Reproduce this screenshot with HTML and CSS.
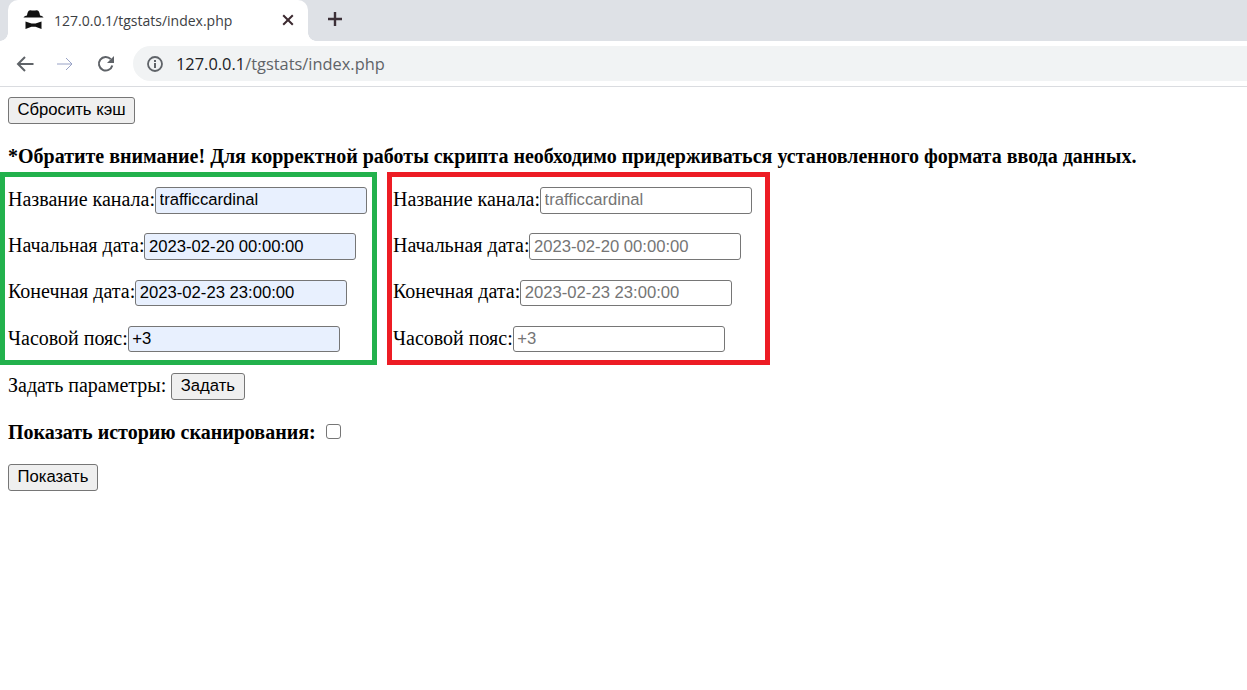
FILE: index.html
```html
<!DOCTYPE html>
<html lang="ru">
<head>
<meta charset="utf-8">
<title>tgstats</title>
<link rel="stylesheet" href="styles.css">
</head>
<body>
<header class="browser">
  <div class="tabstrip">
    <div class="tab">
      <svg class="spy" width="22" height="20" viewBox="0 0 22 20"><path fill="#111" d="M5.500 1C6.500-.2 8.800.6 10.500.6S14.500-.2 15.500 1c.8 1 1.300 3 1.500 4.600 1.600.3 3 .8 3.500 1.900H.5C1 6.400 2.400 5.900 4 5.600 4.200 4 4.700 2 5.500 1z"/><path fill="#111" d="M2.500 11.500l6 2h4l6-2V19l-6-2.300h-4L2.500 19z"/></svg>
      <span class="tab-title">127.0.0.1/tgstats/index.php</span>
      <svg class="close" width="12" height="12" viewBox="0 0 12 12"><path d="M1.200 1.200l9.600 9.600M10.800 1.200l-9.600 9.600" stroke="#3c2a30" stroke-width="2"/></svg>
    </div>
    <svg class="plus" width="16" height="16" viewBox="0 0 16 16"><path d="M8 1v14M1 8h14" stroke="#3c3038" stroke-width="2.400"/></svg>
  </div>
  <div class="toolbar">
    <svg class="nav" width="18" height="16" viewBox="0 0 18 16"><path d="M17.500 8H2M9 1L2 8l7 7" fill="none" stroke="#5f6368" stroke-width="2"/></svg>
    <svg class="nav" width="18" height="16" viewBox="0 0 18 16"><path d="M1 8h15M10 2l6 6-6 6" fill="none" stroke="#98a2c6" stroke-width="1"/></svg>
    <svg class="nav reload" width="18" height="18" viewBox="0 0 18 18"><path d="M15.300 10.500A6.800 6.800 0 1 1 13.800 4.200" fill="none" stroke="#5f6368" stroke-width="2"/><path fill="#5f6368" d="M17 1v7h-7z"/></svg>
    <div class="omnibox">
      <svg class="info" width="16" height="16" viewBox="0 0 16 16"><circle cx="8" cy="8" r="7" fill="none" stroke="#5f6368" stroke-width="1.800"/><path d="M7 7h2v5H7zM7 4h2v2H7z" fill="#5f6368"/></svg>
      <span class="url"><span class="host">127.0.0.1</span>/tgstats/index.php</span>
    </div>
  </div>
</header>
<main class="page">
  <button class="btn btn-block" type="button">Сбросить кэш</button>
  <p class="notice"><b>*Обратите внимание! Для корректной работы скрипта необходимо придерживаться установленного формата ввода данных.</b></p>
  <div class="boxes">
    <form class="box box-green">
      <p class="row"><label>Название канала:</label><input class="field filled" value="trafficcardinal"></p>
      <p class="row"><label>Начальная дата:</label><input class="field filled" value="2023-02-20 00:00:00"></p>
      <p class="row"><label>Конечная дата:</label><input class="field filled" value="2023-02-23 23:00:00"></p>
      <p class="row"><label>Часовой пояс:</label><input class="field filled" value="+3"></p>
    </form>
    <form class="box box-red">
      <p class="row"><label>Название канала:</label><input class="field" placeholder="trafficcardinal"></p>
      <p class="row"><label>Начальная дата:</label><input class="field" placeholder="2023-02-20 00:00:00"></p>
      <p class="row"><label>Конечная дата:</label><input class="field" placeholder="2023-02-23 23:00:00"></p>
      <p class="row"><label>Часовой пояс:</label><input class="field" placeholder="+3"></p>
    </form>
  </div>
  <p class="set"><span class="set-label">Задать параметры:</span> <button class="btn" type="button">Задать</button></p>
  <p class="history"><b>Показать историю сканирования:</b> <input class="check" type="checkbox"></p>
  <button class="btn btn-block" type="button">Показать</button>
</main>
</body>
</html>
```
FILE: styles.css
```css
* { box-sizing: border-box; }
html, body { margin: 0; padding: 0; background: #fff; overflow: hidden; }
body { height: 690px; font-family: "Liberation Serif", serif; font-size: 20px; color: #000; }

.browser { height: 87px; border-bottom: 1px solid #dadce0; display: flex; flex-direction: column; }
.tabstrip { height: 41px; background: #dee1e6; display: flex; align-items: center; padding-left: 8px; }
.tab { position: relative; width: 300px; height: 41px; background: #fff; border-radius: 10px 10px 0 0; display: flex; align-items: center; padding-left: 15px; }
.tab::before, .tab::after { content: ""; position: absolute; bottom: 0; width: 8px; height: 8px; }
.tab::before { left: -8px; background: radial-gradient(circle at 0 0, #dee1e6 7.500px, #fff 8px); }
.tab::after { right: -8px; background: radial-gradient(circle at 100% 0, #dee1e6 7.500px, #fff 8px); }
.spy { flex: none; margin-top: -2px; }
.tab-title { margin-left: 9px; font: 14px "Open Sans", sans-serif; color: #3c4043; white-space: nowrap; width: 198px; }
.close { margin-left: 30px; flex: none; margin-top: -2px; }
.plus { margin-left: 19px; margin-top: -3px; }

.toolbar { height: 45px; background: #fff; display: flex; align-items: center; padding-left: 16px; }
.nav { flex: none; margin-right: 22px; }
.reload { margin-left: 1px; }
.omnibox { flex: 1; height: 35px; margin-left: -4px; background: #f1f3f4; border-radius: 18px 0 0 18px; display: flex; align-items: center; padding-left: 14px; }
.info { flex: none; }
.url { margin-left: 13px; font: 16.400px "Open Sans", sans-serif; color: #5f6368; white-space: nowrap; }
.host { color: #202124; }

.page { padding: 10px 8px 0; }
.btn { height: 27px; padding: 0 8.500px 2px; font: 16.670px "Liberation Sans", sans-serif; color: #000; background: #efefef; border: 1px solid #767676; border-radius: 3px; }
.btn-block { display: block; }
.notice { margin: 21px 0 5px; line-height: 22px; }

.boxes { display: flex; gap: 10px; margin-left: -8px; }
.box { border: 5px solid; height: 193px; padding: 10px 0 0 3px; }
.box-green { width: 377px; border-color: #22b14c; }
.box-red { width: 383px; border-color: #ed1c24; padding-left: 1px; }
.row { margin: 0 0 19.800px; height: 26.500px; display: flex; align-items: center; }
.row label { white-space: nowrap; padding-bottom: 2px; }
.field { width: 212px; height: 26.500px; padding: 0 3.500px; font: 16.670px "Liberation Sans", sans-serif; color: #000; background: #fff; border: 1px solid #767676; border-radius: 3px; outline: 0; }
.field.filled { background: #e8f0fe; }
.field::placeholder { color: #757575; opacity: 1; }

.set { margin: 8px 0 0; height: 27px; display: flex; align-items: center; gap: 5px; }
.set-label { padding-bottom: 2px; }
.history { margin: 21px 0 0; height: 24px; display: flex; align-items: center; gap: 10px; }
.history b { padding-bottom: 1px; }
.check { width: 15px; height: 15px; margin: -4px 0 0; appearance: none; background: #fff; border: 1px solid #767676; border-radius: 3px; }
.history + .btn { margin-top: 19px; }
```
